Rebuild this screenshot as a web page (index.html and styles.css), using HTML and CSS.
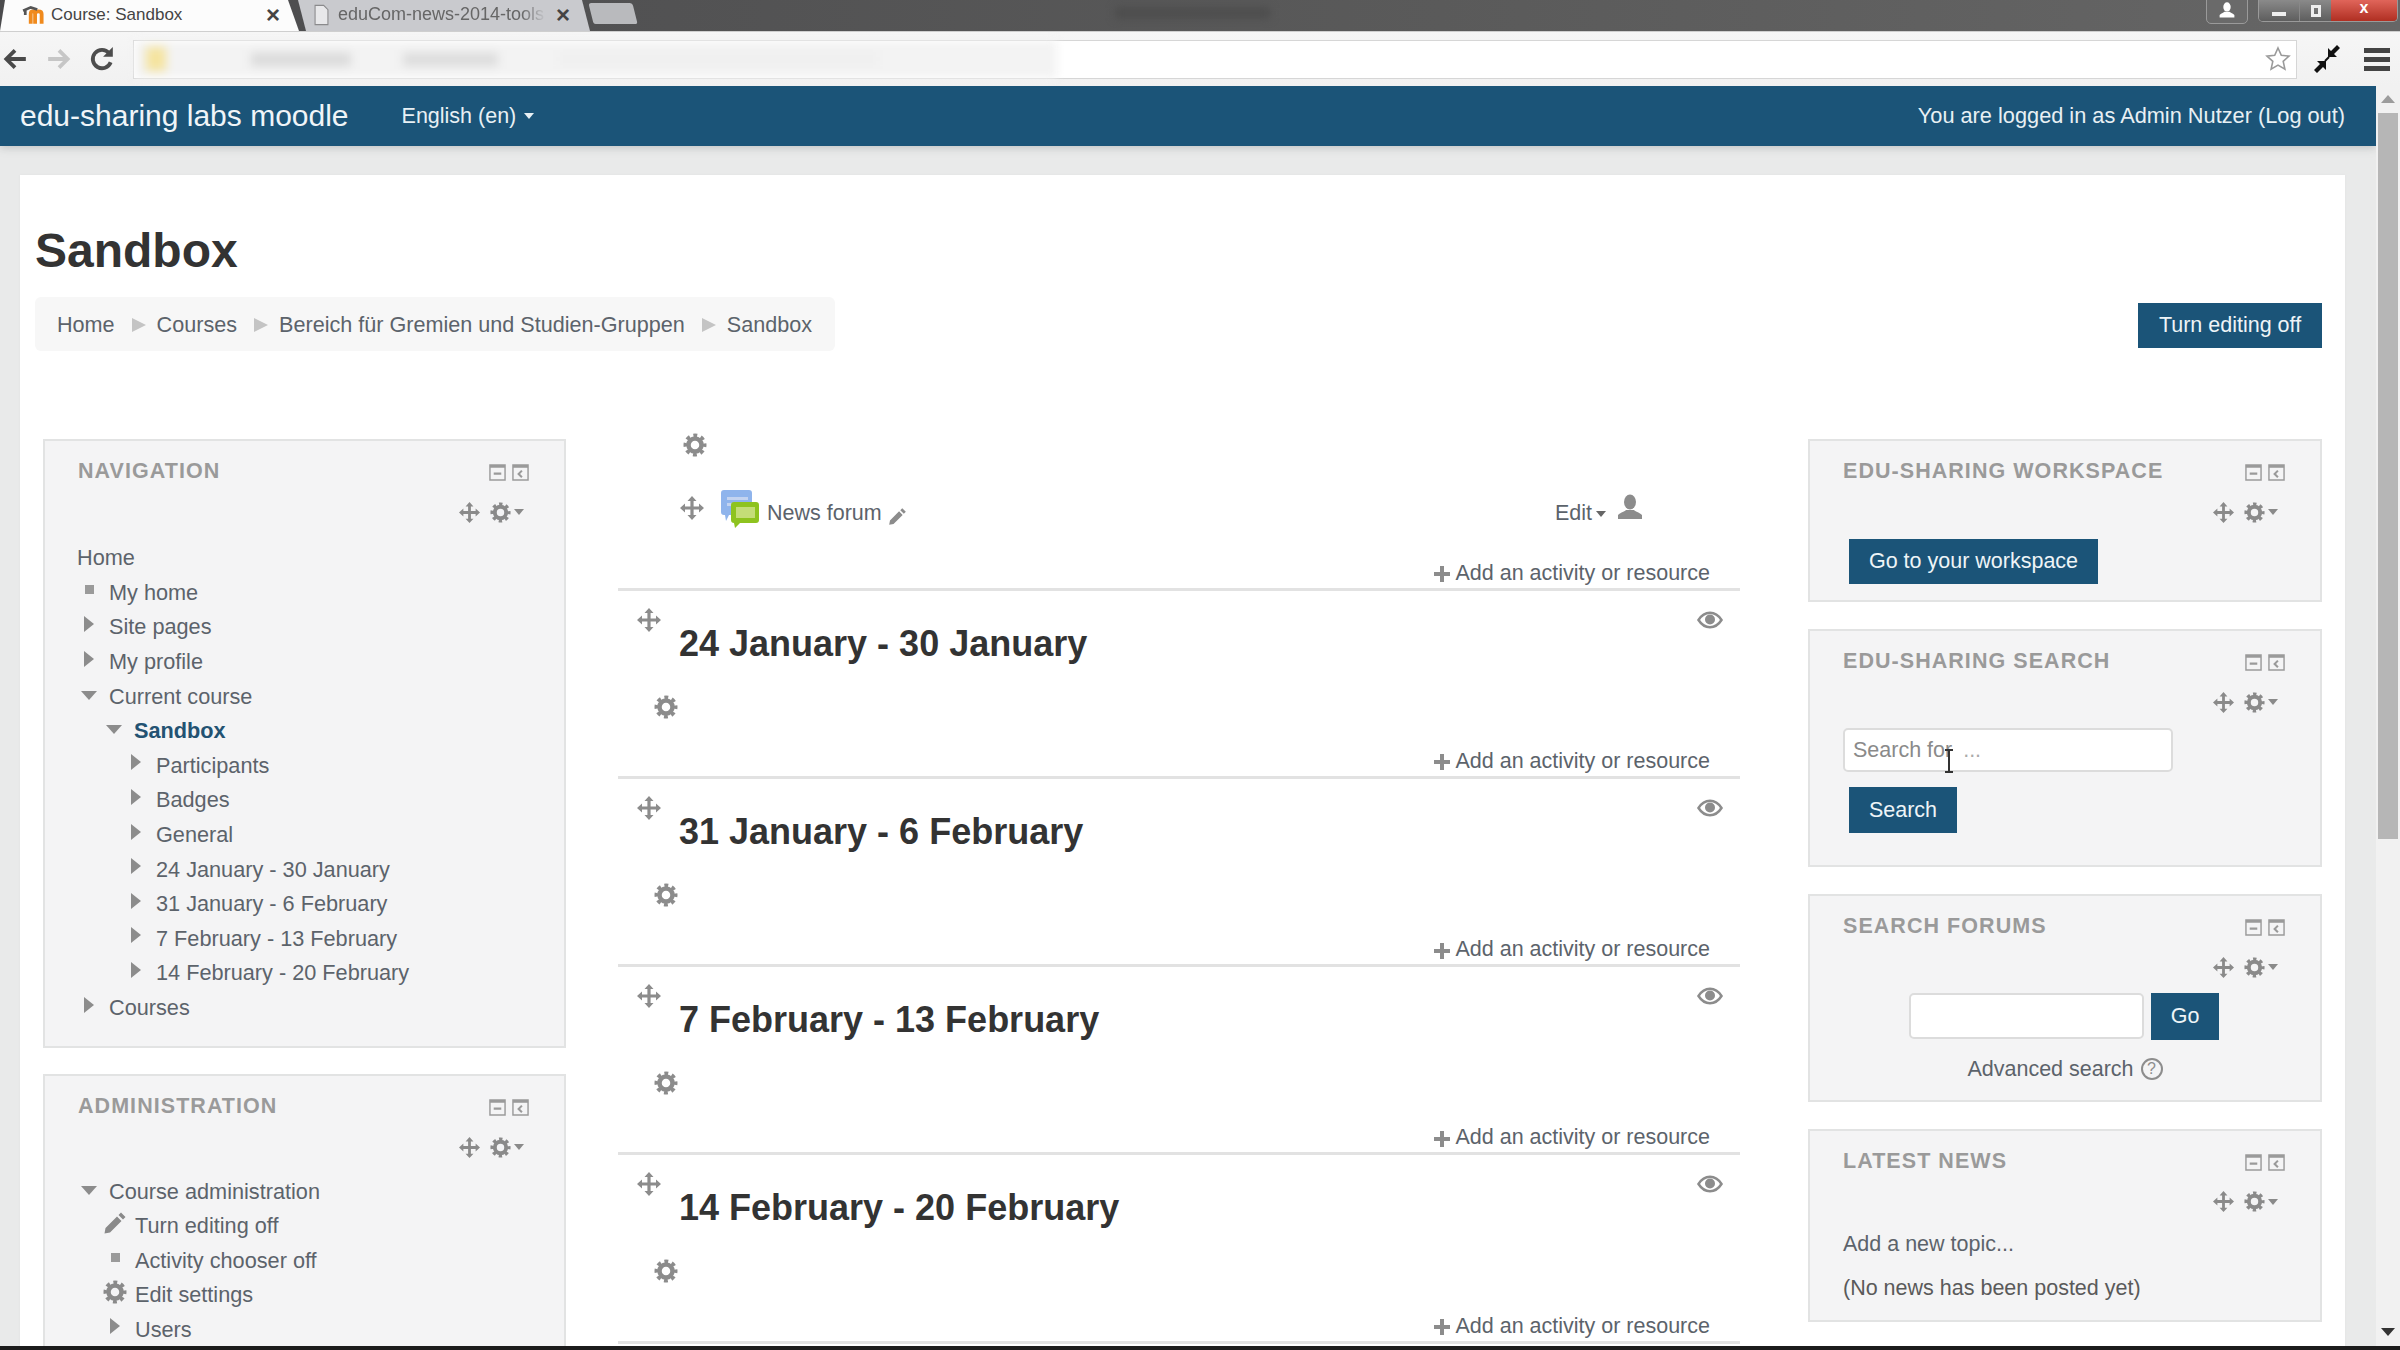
FILE: index.html
```html
<!DOCTYPE html>
<html lang="en">
<head>
<meta charset="utf-8">
<title>Course: Sandbox</title>
<link rel="stylesheet" href="styles.css">
</head>
<body>
<svg class="defs" width="0" height="0" aria-hidden="true">
  <symbol id="gear" viewBox="0 0 24 24">
    <circle cx="12" cy="12" r="9.500" fill="none" stroke="currentColor" stroke-width="4" stroke-dasharray="3.800 3.660" stroke-dashoffset="1.900"/>
    <circle cx="12" cy="12" r="6.500" fill="none" stroke="currentColor" stroke-width="4.500"/>
  </symbol>
  <symbol id="move" viewBox="0 0 24 24">
    <path fill="currentColor" d="M12 0l4.500 5H13.600v5.400H19V7.500l5 4.500-5 4.500v-2.900h-5.400V19h2.900L12 24l-4.500-5h2.900v-5.400H5v2.900L0 12l5-4.500v2.900h5.400V5H7.500z"/>
  </symbol>
  <symbol id="boxmin" viewBox="0 0 18 18">
    <path fill="none" stroke="currentColor" stroke-width="1.500" d="M1 1h16v16H1z"/>
    <path fill="currentColor" d="M1 1h16v3H1zM5 9h8v2.500H5z"/>
  </symbol>
  <symbol id="boxleft" viewBox="0 0 18 18">
    <path fill="none" stroke="currentColor" stroke-width="1.500" d="M1 1h16v16H1z"/>
    <path fill="currentColor" d="M1 1h16v3H1z"/>
    <path fill="none" stroke="currentColor" stroke-width="2.200" d="M10.500 7L7 10.500l3.500 3.500"/>
  </symbol>
  <symbol id="plus" viewBox="0 0 18 18">
    <path fill="currentColor" d="M7 1h4v6h6v4h-6v6H7v-6H1V7h6z"/>
  </symbol>
  <symbol id="eye" viewBox="0 0 26 18">
    <path fill="none" stroke="currentColor" stroke-width="2.500" d="M1.500 9C5 3.500 9 1.800 13 1.800S21 3.500 24.500 9C21 14.500 17 16.200 13 16.200S5 14.500 1.500 9z"/>
    <circle cx="13" cy="8.500" r="5" fill="currentColor"/>
  </symbol>
  <symbol id="person" viewBox="0 0 26 26">
    <ellipse cx="13" cy="8" rx="6" ry="7.500" fill="currentColor"/>
    <path fill="currentColor" d="M1 25v-4c3-3 7-3.500 8-5h8c1 1.500 5 2 8 5v4z"/>
  </symbol>
  <symbol id="pencil" viewBox="0 0 24 24">
    <path fill="currentColor" d="M18 1.500l4.500 4.500-2.500 2.500L15.500 4zM14 5.500L18.500 10 7 21.500l-5.500 1 1-5.500z"/>
  </symbol>
</svg>

<div class="tabstrip">
  <div class="tab tab-active">
    <svg class="favicon" viewBox="0 0 22 18"><path fill="none" stroke="#f08a1d" stroke-width="3.500" d="M8 17V8c0-3 4-3 4 0v9M12 8c0-3 6-3 6 0v9"/><path fill="none" stroke="#555" stroke-width="2.500" d="M1 5l7-3 6 2M3 5v4"/></svg>
    <span class="tab-title">Course: Sandbox</span>
    <span class="tab-x">×</span>
  </div>
  <div class="tab tab-off">
    <svg class="page-ico" viewBox="0 0 14 20"><path fill="#e8e8ea" stroke="#8a8a8c" stroke-width="1" d="M1 1h8l4 4v14H1z"/></svg>
    <span class="tab-title tab-fade">eduCom-news-2014-tools</span>
    <span class="tab-x">×</span>
  </div>
  <div class="tab-new"></div>
  <div class="win-title"></div>
  <div class="win-user"><svg class="win-user-i" viewBox="0 0 26 26"><use href="#person"/></svg></div>
  <div class="win-btns">
    <span class="win-btn win-min"><i class="win-dash"></i></span>
    <span class="win-btn win-max"><i class="win-sq"></i></span>
    <span class="win-btn win-close">x</span>
  </div>
</div>

<div class="toolbar">
  <svg class="tb-ico tb-back" viewBox="0 0 24 24"><path fill="none" stroke="currentColor" stroke-width="3.500" d="M22 12H5M12 4l-8 8 8 8"/></svg>
  <svg class="tb-ico tb-fwd" viewBox="0 0 24 24"><path fill="none" stroke="currentColor" stroke-width="3.500" d="M2 12h17M12 4l8 8-8 8"/></svg>
  <svg class="tb-ico tb-reload" viewBox="0 0 24 24"><path fill="none" stroke="currentColor" stroke-width="3.500" d="M20 15a8.500 8.500 0 1 1-1.500-8.500"/><path fill="currentColor" d="M22 1v9h-9z"/></svg>
  <div class="omni">
    <div class="omni-blur">
      <span class="blur-lock"></span>
      <span class="blur-a"></span>
      <span class="blur-b"></span>
      <span class="blur-c"></span>
    </div>
    <svg class="star" viewBox="0 0 26 26"><path fill="#fff" stroke="#9a9a9a" stroke-width="1.600" d="M13 2l3.300 7.300 7.700.8-5.800 5.200 1.700 7.800L13 19.100l-6.900 4 1.700-7.800L2 10.100l7.700-.8z"/></svg>
  </div>
  <svg class="tb-exit" viewBox="0 0 28 28"><path fill="#111" d="M27 3l-6 6 3 3H15V3l3 3 6-6zM1 25l6-6-3-3h9v9l-3-3-6 6z"/><path stroke="#111" stroke-width="2" d="M12 16l4-4"/></svg>
  <div class="tb-menu"><i></i><i></i><i></i></div>
</div>

<div class="viewport">
  <div class="pagearea">
    <header class="navbar">
      <a class="brand">edu-sharing labs moodle</a>
      <span class="lang">English (en) <i class="caret caret-light"></i></span>
      <span class="login">You are logged in as Admin Nutzer (Log out)</span>
    </header>

    <main class="card">
      <h1 class="page-title">Sandbox</h1>
      <div class="crumb-row">
        <nav class="crumbs">
          <a>Home</a><i class="sep"></i>
          <a>Courses</a><i class="sep"></i>
          <a>Bereich für Gremien und Studien-Gruppen</a><i class="sep"></i>
          <a>Sandbox</a>
        </nav>
        <button class="btn btn-edit">Turn editing off</button>
      </div>

      <div class="columns">
        <aside class="col col-left">
          <section class="block block-nav">
            <div class="block-head">
              <h2 class="block-title">NAVIGATION</h2>
              <span class="box-icons"><svg class="box"><use href="#boxmin"/></svg><svg class="box"><use href="#boxleft"/></svg></span>
            </div>
            <div class="block-ctrl"><svg class="i-move"><use href="#move"/></svg><svg class="i-gear"><use href="#gear"/></svg><i class="caret caret-grey"></i></div>
            <ul class="tree">
              <li class="row row-home"><a>Home</a></li>
              <li class="row"><span class="cell"><i class="sq"></i></span><a>My home</a></li>
              <li class="row"><span class="cell"><i class="tri-r"></i></span><a>Site pages</a></li>
              <li class="row"><span class="cell"><i class="tri-r"></i></span><a>My profile</a></li>
              <li class="row"><span class="cell"><i class="tri-d"></i></span><a>Current course</a></li>
              <li class="row lv2"><span class="cell"><i class="tri-d"></i></span><a class="current">Sandbox</a></li>
              <li class="row lv3"><span class="cell"><i class="tri-r"></i></span><a>Participants</a></li>
              <li class="row lv3"><span class="cell"><i class="tri-r"></i></span><a>Badges</a></li>
              <li class="row lv3"><span class="cell"><i class="tri-r"></i></span><a>General</a></li>
              <li class="row lv3"><span class="cell"><i class="tri-r"></i></span><a>24 January - 30 January</a></li>
              <li class="row lv3"><span class="cell"><i class="tri-r"></i></span><a>31 January - 6 February</a></li>
              <li class="row lv3"><span class="cell"><i class="tri-r"></i></span><a>7 February - 13 February</a></li>
              <li class="row lv3"><span class="cell"><i class="tri-r"></i></span><a>14 February - 20 February</a></li>
              <li class="row"><span class="cell"><i class="tri-r"></i></span><a>Courses</a></li>
            </ul>
          </section>
          <section class="block block-admin">
            <div class="block-head">
              <h2 class="block-title">ADMINISTRATION</h2>
              <span class="box-icons"><svg class="box"><use href="#boxmin"/></svg><svg class="box"><use href="#boxleft"/></svg></span>
            </div>
            <div class="block-ctrl"><svg class="i-move"><use href="#move"/></svg><svg class="i-gear"><use href="#gear"/></svg><i class="caret caret-grey"></i></div>
            <ul class="tree tree-admin">
              <li class="row"><span class="cell"><i class="tri-d"></i></span><span>Course administration</span></li>
              <li class="row lv2"><span class="cell"><svg class="i-big"><use href="#pencil"/></svg></span><a>Turn editing off</a></li>
              <li class="row lv2"><span class="cell"><i class="sq"></i></span><a>Activity chooser off</a></li>
              <li class="row lv2"><span class="cell"><svg class="i-big"><use href="#gear"/></svg></span><a>Edit settings</a></li>
              <li class="row lv2"><span class="cell"><i class="tri-r"></i></span><a>Users</a></li>
            </ul>
          </section>
        </aside>

        <div class="col col-center">
          <section class="sec-zero">
            <svg class="sec-zero-gear"><use href="#gear"/></svg>
            <div class="activity">
              <svg class="act-move"><use href="#move"/></svg>
              <svg class="forum-ico" viewBox="0 0 38 38">
                <path fill="#8fb4ec" d="M3 0h25a3 3 0 0 1 3 3v22H8l-3 6-1-6H3a3 3 0 0 1-3-3V3a3 3 0 0 1 3-3z"/>
                <path fill="#c3d3f0" d="M6 7h21v3H6zM6 13h14v3H6z"/>
                <path fill="#8ec31f" d="M13 12h22a3 3 0 0 1 3 3v15a3 3 0 0 1-3 3H19l-5 5-1-5a3 3 0 0 1-3-3V15a3 3 0 0 1 3-3z"/>
                <rect x="15" y="17" width="19" height="11" fill="#c4dd78"/>
              </svg>
              <a class="act-name">News forum</a>
              <svg class="act-pencil"><use href="#pencil"/></svg>
              <a class="act-edit">Edit<i class="caret caret-dark"></i></a>
              <svg class="act-person"><use href="#person"/></svg>
            </div>
            <div class="add-row"><svg class="i-plus"><use href="#plus"/></svg><a>Add an activity or resource</a></div>
          </section>

          <section class="week">
            <div class="week-head"><svg class="week-move"><use href="#move"/></svg><h3 class="week-title">24 January - 30 January</h3><svg class="week-eye"><use href="#eye"/></svg></div>
            <svg class="week-gear"><use href="#gear"/></svg>
            <div class="add-row add-week"><svg class="i-plus"><use href="#plus"/></svg><a>Add an activity or resource</a></div>
          </section>
          <section class="week">
            <div class="week-head"><svg class="week-move"><use href="#move"/></svg><h3 class="week-title">31 January - 6 February</h3><svg class="week-eye"><use href="#eye"/></svg></div>
            <svg class="week-gear"><use href="#gear"/></svg>
            <div class="add-row add-week"><svg class="i-plus"><use href="#plus"/></svg><a>Add an activity or resource</a></div>
          </section>
          <section class="week">
            <div class="week-head"><svg class="week-move"><use href="#move"/></svg><h3 class="week-title">7 February - 13 February</h3><svg class="week-eye"><use href="#eye"/></svg></div>
            <svg class="week-gear"><use href="#gear"/></svg>
            <div class="add-row add-week"><svg class="i-plus"><use href="#plus"/></svg><a>Add an activity or resource</a></div>
          </section>
          <section class="week">
            <div class="week-head"><svg class="week-move"><use href="#move"/></svg><h3 class="week-title">14 February - 20 February</h3><svg class="week-eye"><use href="#eye"/></svg></div>
            <svg class="week-gear"><use href="#gear"/></svg>
            <div class="add-row add-week"><svg class="i-plus"><use href="#plus"/></svg><a>Add an activity or resource</a></div>
          </section>
        </div>

        <aside class="col col-right">
          <section class="block block-work">
            <div class="block-head">
              <h2 class="block-title">EDU-SHARING WORKSPACE</h2>
              <span class="box-icons"><svg class="box"><use href="#boxmin"/></svg><svg class="box"><use href="#boxleft"/></svg></span>
            </div>
            <div class="block-ctrl"><svg class="i-move"><use href="#move"/></svg><svg class="i-gear"><use href="#gear"/></svg><i class="caret caret-grey"></i></div>
            <div class="block-body"><button class="btn btn-work">Go to your workspace</button></div>
          </section>
          <section class="block block-search">
            <div class="block-head">
              <h2 class="block-title">EDU-SHARING SEARCH</h2>
              <span class="box-icons"><svg class="box"><use href="#boxmin"/></svg><svg class="box"><use href="#boxleft"/></svg></span>
            </div>
            <div class="block-ctrl"><svg class="i-move"><use href="#move"/></svg><svg class="i-gear"><use href="#gear"/></svg><i class="caret caret-grey"></i></div>
            <div class="search-body">
              <div class="field field-search">Search for <span class="dots">...</span>
                <svg class="ibeam" viewBox="0 0 10 24"><path fill="none" stroke="#333" stroke-width="2" d="M1 1h8M5 1v22M1 23h8"/></svg>
              </div>
              <button class="btn btn-search">Search</button>
            </div>
          </section>
          <section class="block block-forums">
            <div class="block-head">
              <h2 class="block-title">SEARCH FORUMS</h2>
              <span class="box-icons"><svg class="box"><use href="#boxmin"/></svg><svg class="box"><use href="#boxleft"/></svg></span>
            </div>
            <div class="block-ctrl"><svg class="i-move"><use href="#move"/></svg><svg class="i-gear"><use href="#gear"/></svg><i class="caret caret-grey"></i></div>
            <div class="forum-form"><div class="field field-forum"></div><button class="btn btn-go">Go</button></div>
            <div class="adv"><a>Advanced search</a><span class="help">?</span></div>
          </section>
          <section class="block block-news">
            <div class="block-head">
              <h2 class="block-title">LATEST NEWS</h2>
              <span class="box-icons"><svg class="box"><use href="#boxmin"/></svg><svg class="box"><use href="#boxleft"/></svg></span>
            </div>
            <div class="block-ctrl"><svg class="i-move"><use href="#move"/></svg><svg class="i-gear"><use href="#gear"/></svg><i class="caret caret-grey"></i></div>
            <div class="news-body"><a>Add a new topic...</a><p class="news-empty">(No news has been posted yet)</p></div>
          </section>
        </aside>
      </div>
    </main>
  </div>
  <div class="scrollbar">
    <i class="sb-up"></i>
    <div class="sb-track"><div class="sb-thumb"></div></div>
    <i class="sb-down"></i>
  </div>
</div>
<div class="taskbar"></div>
</body>
</html>
```
FILE: styles.css
```css
* { box-sizing: border-box; }
html, body { margin: 0; padding: 0; height: 1350px; overflow: hidden; }
body { font-family: "Liberation Sans", Arial, sans-serif; font-size: 21.5px; color: #5c636b; background: #e9eaea; display: flex; flex-direction: column; }
.defs { position: absolute; }
ul { list-style: none; margin: 0; padding: 0; }
h1, h2, h3, p { margin: 0; }
svg { display: block; flex: none; }
i { display: block; flex: none; }

/* browser chrome */
.tabstrip { height: 31px; flex: none; display: flex; background: linear-gradient(90deg, #4b4b4d, #5a5a5a 60%, #666 100%); position: relative; overflow: hidden; }
.tab { height: 31px; display: flex; align-items: center; font-size: 17px; padding-bottom: 2px; }
.tab-active { width: 299px; margin-left: 0; padding-left: 22px; background: #fcfcfc; color: #444; clip-path: polygon(0 31px, 5px 0, 288px 0, 299px 31px); }
.favicon { width: 24px; height: 20px; margin-right: 5px; }
.tab-title { white-space: nowrap; overflow: hidden; }
.tab-active .tab-title { width: 215px; }
.tab-x { font-size: 24px; font-weight: bold; color: #444; line-height: 1; }
.tab-off { width: 292px; margin-left: -1px; padding-left: 16px; background: #c9cace; color: #666; font-size: 18px; clip-path: polygon(0 0, 284px 0, 292px 31px, 8px 31px); }
.page-ico { width: 15px; height: 22px; margin-right: 9px; }
.tab-fade { width: 208px; margin-right: 10px; -webkit-mask-image: linear-gradient(90deg, #000 88%, transparent); mask-image: linear-gradient(90deg, #000 88%, transparent); }
.tab-new { width: 44px; height: 21px; margin: 3px 0 0 1px; background: #b9babd; border-radius: 3px 3px 2px 2px; transform: skewX(14deg); }
.win-title { width: 155px; height: 10px; margin: 8px 0 0 480px; background: #4c4c4c; filter: blur(4px); }
.win-user { position: absolute; left: 2206px; top: -2px; width: 42px; height: 26px; border: 1px solid #9a9a9a; border-radius: 0 0 5px 5px; background: #6a6a6a; }
.win-user-i { width: 16px; height: 16px; margin: 3px auto 0; color: #fff; }
.win-btns { position: absolute; left: 2258px; top: 0; height: 22px; display: flex; border: 1px solid #9a9a9a; border-top: 0; border-radius: 0 0 5px 5px; overflow: hidden; }
.win-btn { height: 21px; display: flex; align-items: center; justify-content: center; background: linear-gradient(#8a8a8a, #5e5e5e); }
.win-min { width: 40px; }
.win-max { width: 32px; border-left: 1px solid #888; }
.win-close { width: 66px; background: linear-gradient(#e0655a, #b02f22); color: #fff; font-weight: bold; font-size: 16px; line-height: 1; padding-bottom: 5px; }
.win-dash { width: 14px; height: 4px; background: #eee; margin-top: 6px; }
.win-sq { width: 10px; height: 12px; border: 3px solid #eee; }

.toolbar { height: 55px; flex: none; background: linear-gradient(#f6f6f6, #f1f1f1); border-top: 1px solid #cfcfcf; display: flex; align-items: center; }
.tb-ico { width: 26px; height: 26px; }
.tb-back { margin-left: 2px; color: #4a4a4a; }
.tb-fwd { margin-left: 18px; color: #c6c6c6; }
.tb-reload { margin-left: 17px; color: #4d4d4d; }
.omni { width: 2164px; height: 39px; margin: 0 0 0 18px; background: #fff; border: 1px solid #d6d6d6; display: flex; align-items: center; }
.omni-blur { width: 923px; height: 100%; background: #f3f3f3; position: relative; filter: blur(5px); display: flex; align-items: center; }
.blur-lock { width: 20px; height: 24px; margin-left: 12px; background: #f5e49f; }
.blur-a { width: 100px; height: 13px; margin-left: 85px; background: #dadada; }
.blur-b { width: 95px; height: 13px; margin-left: 52px; background: #dcdcdc; }
.blur-c { width: 320px; height: 12px; margin-left: 60px; background: #efefef; }
.star { width: 26px; height: 26px; margin-left: auto; margin-right: 5px; }
.tb-exit { width: 28px; height: 28px; margin-left: 16px; }
.tb-menu { width: 26px; margin-left: 23px; display: flex; flex-direction: column; gap: 4px; }
.tb-menu i { height: 5px; background: #444; }

/* viewport */
.viewport { height: 1260px; flex: none; display: flex; }
.pagearea { width: 2376px; flex: none; overflow: hidden; }
.scrollbar { width: 24px; flex: none; background: #f1f1f1; display: flex; flex-direction: column; align-items: center; padding-top: 9px; position: relative; }
.sb-up { border: 7px solid transparent; border-bottom: 8px solid #9c9c9c; border-top: 0; }
.sb-track { width: 100%; flex: 1; padding: 10px 2px 0; }
.sb-thumb { height: 726px; background: #b6b6b6; }
.sb-down { border: 7px solid transparent; border-top: 8px solid #333; border-bottom: 0; margin-bottom: 10px; }
.taskbar { flex: 1; background: #1c1c1c; }

.navbar { height: 60px; background: #1b5478; color: #e8f0f4; display: flex; align-items: center; padding: 0 31px 0 20px; box-shadow: 0 2px 8px rgba(120,125,125,.35); position: relative; }
.brand { font-size: 30px; color: #f0f5f8; }
.lang { margin-left: 53px; display: flex; align-items: center; gap: 2px; white-space: pre; }
.login { margin-left: auto; font-size: 21.750px; }
.caret { width: 0; height: 0; border: 5.500px solid transparent; border-bottom: 0; }
.caret-light { border-top: 6px solid #e8f0f4; }
.caret-grey { border-top: 6px solid #8a8a8a; margin-left: 3.500px; }
.caret-dark { border-top: 6px solid #666; margin-left: 4px; }

.card { margin: 29px 31px 0 20px; padding: 46px 23px 0 15px; background: #fff; height: 1200px; overflow: hidden; box-shadow: 0 0 3px rgba(0,0,0,.04); }
.page-title { font-size: 48px; line-height: 60px; font-weight: bold; color: #333; }
.crumb-row { margin-top: 16px; display: flex; justify-content: space-between; align-items: flex-start; }
.crumbs { width: 800px; height: 54px; padding: 1px 22px 0; background: #f7f7f7; border-radius: 6px; display: flex; align-items: center; font-size: 21.600px; }
.sep { margin: 0 11px 0 17px; border-left: 14px solid #c4c4c4; border-top: 7px solid transparent; border-bottom: 7px solid transparent; }
.btn { border: 0; border-radius: 0; background: #1b5478; color: #eef4f7; font: 21.500px "Liberation Sans", Arial, sans-serif; padding: 0; display: block; text-align: center; }
.btn-edit { width: 184px; height: 45px; margin-top: 6px; }

.columns { margin: 88px 0 0 8px; display: flex; align-items: flex-start; }
.col { flex: none; display: flex; flex-direction: column; }
.col-left { width: 523px; gap: 26px; }
.col-center { width: 1122px; margin: -6px 68px 0 52px; }
.col-right { width: 514px; gap: 27px; }

/* blocks */
.block { background: #f4f4f5; border: 2px solid #e2e3e3; }
.block-head { display: flex; justify-content: space-between; align-items: flex-start; padding: 18px 35px 0 33px; height: 60px; }
.block-title { font-size: 21.500px; line-height: 24px; font-weight: bold; color: #9a9a9a; letter-spacing: 1.050px; white-space: nowrap; }
.box-icons { display: flex; gap: 6px; margin-top: 5px; }
.box { width: 17px; height: 17px; color: #9a9a9a; }
.block-ctrl { height: 22px; display: flex; align-items: center; justify-content: flex-end; padding-right: 40px; color: #8a8a8a; }
.col-right .block-ctrl { padding-right: 42px; }
.i-move { width: 21px; height: 21px; margin-right: 9.500px; }
.i-gear { width: 21px; height: 21px; }

.tree { padding: 18px 0 21px 32px; font-size: 21.700px; }
.tree-admin { padding-top: 16px; }
.row { height: 34.600px; display: flex; align-items: center; gap: 8px; white-space: nowrap; }
.lv2 { padding-left: 25px; }
.tree-admin .lv2 { padding-left: 26px; }
.lv3 { padding-left: 47px; }
.cell { width: 24px; height: 24px; display: flex; align-items: center; justify-content: center; margin-bottom: 7px; color: #8a8a8a; }
.sq { width: 9px; height: 9px; background: #9a9a9a; }
.tri-r { border-left: 10px solid #8c8c8c; border-top: 8px solid transparent; border-bottom: 8px solid transparent; }
.tri-d { border-top: 9px solid #8c8c8c; border-left: 8px solid transparent; border-right: 8px solid transparent; margin-top: 4px; }
.current { font-weight: bold; color: #235272; }
.i-big { width: 24px; height: 24px; }
.block-admin { height: 400px; }

.block-body { padding: 16px 0 16px 39px; }
.btn-work { width: 249px; height: 45px; }
.search-body { padding: 15px 0 32px 33px; }
.field { background: #fff; border: 2px solid #dcdcdc; border-radius: 5px; }
.field-search { width: 330px; height: 44px; padding-left: 8px; line-height: 40px; color: #8a8a8a; position: relative; white-space: pre; }
.dots { color: #aaa; margin-left: 5px; }
.ibeam { position: absolute; left: 99px; top: 19px; width: 10px; height: 24px; }
.btn-search { width: 108px; height: 46px; margin: 15px 0 0 6px; }
.forum-form { display: flex; align-items: center; gap: 7px; padding: 14.500px 0 0 99px; }
.field-forum { width: 235px; height: 46px; }
.btn-go { width: 68px; height: 47px; }
.adv { display: flex; align-items: center; justify-content: center; gap: 7px; margin: 12px 0 0 0; padding: 0 0 14px 0; line-height: 34px; height: 48px; }
.help { width: 22px; height: 22px; border: 2px solid #8d8d8d; border-radius: 50%; font-size: 16px; line-height: 18px; text-align: center; color: #8d8d8d; }
.news-body { padding: 18px 0 19px 33px; line-height: 26px; }
.news-empty { margin-top: 18px; color: #5a5a5a; }

/* centre */
.sec-zero { border-bottom: 3px solid #e2e2e2; }
.sec-zero-gear { width: 24px; height: 24px; margin-left: 65px; color: #8c8c8c; }
.activity { height: 38px; margin-top: 33px; display: flex; align-items: flex-start; padding-left: 62px; }
.act-move { width: 24px; height: 24px; margin-top: 6px; color: #8c8c8c; }
.forum-ico { width: 38px; height: 38px; margin-left: 17px; }
.act-name { margin: 11px 0 0 8px; line-height: 25px; }
.act-pencil { width: 19px; height: 19px; margin: 17px 0 0 6px; color: #8c8c8c; }
.act-edit { margin: 11px 0 0 auto; line-height: 25px; display: flex; align-items: center; }
.act-person { width: 26px; height: 26px; margin: 4px 97px 0 11px; color: #8c8c8c; }
.add-row { height: 31px; margin-top: 28.500px; padding: 2px 30px 0 0; display: flex; align-items: center; justify-content: flex-end; gap: 4px; }
.add-week { margin-top: 26.300px; }
.i-plus { width: 18px; height: 18px; color: #8c8c8c; margin-top: 2px; }
.week { border-bottom: 3px solid #e2e2e2; }
.week-head { height: 74px; display: flex; align-items: flex-start; padding: 0 17px 0 19px; }
.week-move { width: 24px; height: 24px; margin-top: 17px; color: #8c8c8c; }
.week-title { margin: 31px 0 0 18px; font-size: 36px; line-height: 44px; font-weight: bold; color: #333; white-space: nowrap; }
.week-eye { width: 26px; height: 18px; margin: 20px 0 0 auto; color: #8c8c8c; }
.week-gear { width: 24px; height: 24px; margin: 30px 0 0 36px; color: #8c8c8c; }
```
